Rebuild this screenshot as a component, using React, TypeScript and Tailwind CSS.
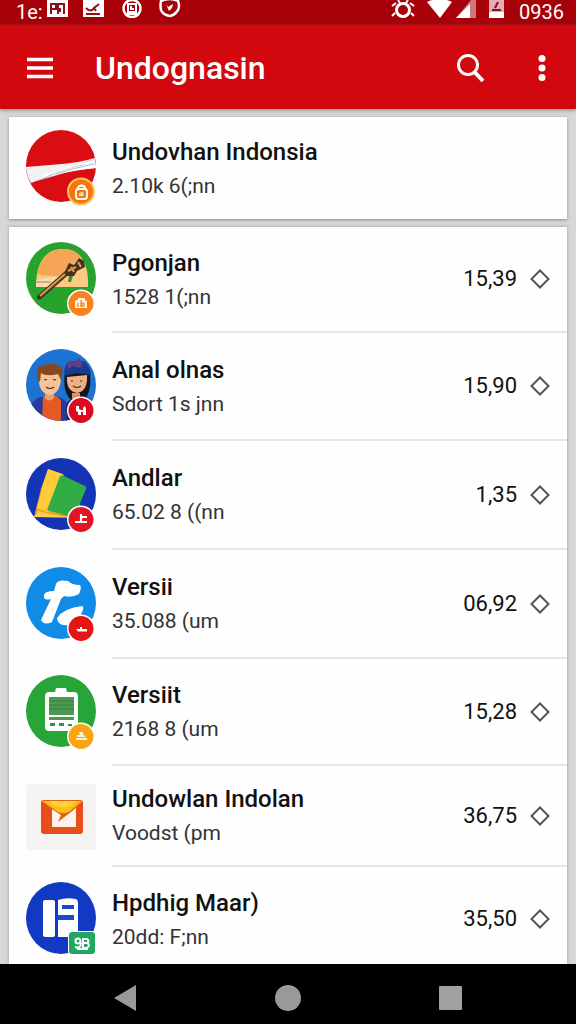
import React from "react";

type Item = {
  title: string;
  detail: string;
  amount?: string;
  icon: React.ReactNode;
  height: string;
};

const Disc = ({ fill, children }: { fill: string; children?: React.ReactNode }) => (
  <svg viewBox="0 0 72 76" className="h-[76px] w-[72px] shrink-0" aria-hidden="true">
    <ellipse cx="35" cy="36" rx="35" ry="36" fill={fill} />
    {children}
  </svg>
);

const Badge = ({ fill, children }: { fill: string; children?: React.ReactNode }) => (
  <g>
    <circle cx="55" cy="61.5" r="14" fill="#fff" />
    <circle cx="55" cy="61.5" r="12.5" fill={fill} />
    {children}
  </g>
);

const FlagIcon = () => (
  <Disc fill="#d90d12">
    <path d="M0 37C24 35 49 34 69 28L70 38C45 40 25 45 5 53Q1 47 0 37Z" fill="#f1f2f4" />
    <path d="M11 51Q34 38 69 29Q49 40 32 45Z" fill="#c5c8ce" />
    <path d="M20 48Q42 37 69 33L70 38Q40 41 20 48Z" fill="#fff" />
    <path d="M16 47Q40 37 68 31" stroke="#fff" strokeWidth="1.500" fill="none" />
    <path d="M30 44Q48 38 68 34" stroke="#b8bbc2" strokeWidth="1" fill="none" />
    <circle cx="55" cy="61.5" r="14" fill="#ffc267" />
    <circle cx="55" cy="61.5" r="12" fill="#f5760b" />
    <rect x="50" y="59" width="11" height="10" rx="2.5" fill="none" stroke="#fff" strokeWidth="1.8" />
    <path d="M51.500 58.500L53 56h5l1.500 2.500M55.500 56v-2" fill="none" stroke="#fff" strokeWidth="1.800" />
    <path d="M53 66v-3h1l1-1h2l1 4z" fill="#ffd9ae" />
  </Disc>
);

const FluteIcon = () => (
  <Disc fill="#27a22c">
    <path d="M10 45C10 24 17 7 37 7C56 7 63 24 62 45Z" fill="#fac982" />
    <path d="M11 32C14 17 22 8 37 7C45 7 51 10 55 15L32 34Q20 34 11 32Z" fill="#f6a557" />
    <path d="M10 38Q23 34 34 36L26 45H10Z" fill="#f9dcae" />
    <path d="M10 40h15" stroke="#b6a673" strokeWidth="1.500" />
    <path d="M11 54L39 29L43 21L48 23L53 16L58 19L59 25L51 29L48 34L41 34L15 57Q10 59 11 54Z" fill="#44301d" />
    <path d="M14 54L39 32M42 29L50 25M45 25l3 5M52 20l3 5" stroke="#d79850" strokeWidth="2.200" fill="none" />
    <path d="M43 34l4 0-2 6-3 0z" fill="#3c8b28" />
    <Badge fill="#f8811d">
      <path d="M50 58h2v-2h7v2l2 1v7H49v-7z" fill="#fff1df" />
      <path d="M52 65v-4M55 58v7M58 61h-2v4M58 61v4" stroke="#f8811d" strokeWidth="1.200" fill="none" />
    </Badge>
  </Disc>
);

const PeopleIcon = () => (
  <Disc fill="#1d73d2">
    <clipPath id="people">
      <ellipse cx="35" cy="36" rx="35" ry="36" />
    </clipPath>
    <g clipPath="url(#people)">
      <path d="M39 23Q36 43 45 51H58Q66 43 64 24Z" fill="#17171f" />
      <path d="M5 73V56Q8 49 19 47L29 47Q38 49 41 54V73Z" fill="#2a3a9b" />
      <path d="M17 47H30L35 51V74H16Z" fill="#e35a24" />
      <path d="M40 73V56Q42 50 50 48H61Q68 51 68 73Z" fill="#1c2c6d" />
      <path d="M19 43h9v6q-5 5-9 0z" fill="#e4a06e" />
      <path d="M13 25Q11 44 24 46Q36 44 35 24L28 20H17Z" fill="#f6c397" />
      <path d="M12 31Q8 17 18 16Q34 12 37 22L35 31L32 25Q20 28 15 24L14 33Z" fill="#87471f" />
      <path d="M41 28Q40 42 51 44Q62 42 61 26Z" fill="#efb083" />
      <path d="M38 27Q38 14 44 12L58 12Q64 16 65 26L51 24Z" fill="#173b8e" />
      <path d="M41 15L44 11L48 13L53 9L57 14L54 19L47 17L42 20Z" fill="#604083" />
      <path d="M46 44h8v6h-8z" fill="#dc9164" />
    </g>
    <path d="M18 31q2-1 3 0M27 31q2-1 3 0M20 38q4 3 8 0M45 32h2M54 32h2M47 37q4 3 8 0" stroke="#542e20" strokeWidth="1.200" fill="none" />
    <Badge fill="#dc0c20">
      <path d="M50 57h3v3l2 1v5h-3v-3l-2-1zM57 59l2-2 1 3v6h-3v-3h-2v-2h2z" fill="#fff" />
    </Badge>
  </Disc>
);

const FolderIcon = () => (
  <Disc fill="#1234b5">
    <path d="M22 11L37 16L57 53L45 60L8 59L15 31L18 29Z" fill="#f2a81c" />
    <path d="M22 11L36 16L22 54L11 50L16 32L15 31Z" fill="#ffcb3a" />
    <path d="M12 53L23 56L40 59H9Z" fill="#ffd154" />
    <path d="M34 18Q36 17 38 18L59 28Q61 29 60 31L48 60L21 52Z" fill="#32ad46" />
    <Badge fill="#e21622">
      <path d="M55 56v9M55 59h6M49 64h12" stroke="#fff" strokeWidth="2.200" fill="none" />
    </Badge>
  </Disc>
);

const StrokesIcon = () => (
  <Disc fill="#118be8">
    <path d="M30 17Q32 12 42 14Q46 18 54 18Q56 20 53 27Q46 31 38 29L35 32L26 55Q18 59 15 53L25 32Q17 34 18 28Q19 24 28 24Z" fill="#fff" />
    <path d="M31 51Q38 41 56 39Q59 40 55 47Q58 54 47 58Q31 60 31 51Z" fill="#fff" />
    <Badge fill="#e61514">
      <path d="M50 62h11v2.500h-9zM54 60h2v2h-2z" fill="#fff" />
    </Badge>
  </Disc>
);

const ClipboardIcon = () => (
  <Disc fill="#28a538">
    <path d="M19 22Q19 17 23 17H29L30 13H40L41 17H48Q52 17 52 22V52Q52 56 48 56H23Q19 56 19 52Z" fill="#fff" />
    <path d="M23 22h25v18H23zM23 42h25v3H23z" fill="#4e9951" />
    <path d="M23 26h25M23 30h25M23 34h25" stroke="#338241" strokeWidth="1" />
    <path d="M24 48h5v3h-5zM33 48h5v3h-5zM42 49h4v2h-4z" fill="#328d60" />
    <Badge fill="#faa414">
      <path d="M53 57h4v2l3 3H51v-2h3zM50 63h11v2H50z" fill="#fff0cd" />
    </Badge>
  </Disc>
);

const MailIcon = () => (
  <svg viewBox="0 0 72 66" className="h-[66px] w-[72px] shrink-0" aria-hidden="true">
    <rect width="70" height="66" rx="2" fill="#f5f4f2" />
    <rect x="15" y="16" width="42" height="34" rx="3" fill="#e94e18" />
    <path d="M26 23H50V43H26Z" fill="#fff2e9" />
    <path d="M15 18Q16 16 20 16H53Q56 16 57 18L45 28L32 38L35 31Z" fill="#df641b" />
    <path d="M16 17H56L43 28Q37 30 32 28Z" fill="#ffbd18" />
    <path d="M23 17H50L44 22Q35 25 28 21Z" fill="#ffd735" />
  </svg>
);

const BookIcon = () => (
  <Disc fill="#1239c3">
    <rect x="17" y="18" width="12" height="37" rx="2" fill="#fff" />
    <path d="M32 18Q40 15 50 17Q52 18 52 21V55H32Z" fill="#fff" />
    <path d="M36 23h12v4H36zM31 33h17v5H31z" fill="#1b49c9" />
    <rect x="42" y="49" width="28" height="24" rx="4" fill="#fff" />
    <rect x="43" y="50" width="26" height="22" rx="3" fill="#22a660" />
    <circle cx="52" cy="59" r="2.500" fill="none" stroke="#fff" strokeWidth="2" />
    <path d="M49 65q6 2 6-4M51 67h11M57 56v10M57 57h4q3 2 0 4h-4M61 61q4 2 0 5h-4" fill="none" stroke="#fff" strokeWidth="2" />
  </Disc>
);

const items: Item[] = [
  { title: "Pgonjan", detail: "1528 1(;nn", amount: "15,39", icon: <FluteIcon />, height: "h-[106px]" },
  { title: "Anal olnas", detail: "Sdort 1s jnn", amount: "15,90", icon: <PeopleIcon />, height: "h-[108px]" },
  { title: "Andlar", detail: "65.02 8 ((nn", amount: "1,35", icon: <FolderIcon />, height: "h-[109px]" },
  { title: "Versii", detail: "35.088 (um", amount: "06,92", icon: <StrokesIcon />, height: "h-[109px]" },
  { title: "Versiit", detail: "2168 8 (um", amount: "15,28", icon: <ClipboardIcon />, height: "h-[107px]" },
  { title: "Undowlan Indolan", detail: "Voodst (pm", amount: "36,75", icon: <MailIcon />, height: "h-[101px]" },
  { title: "Hpdhig Maar)", detail: "20dd: F;nn", amount: "35,50", icon: <BookIcon />, height: "h-[106px]" },
];

const Label = ({ title, detail }: { title: string; detail: string }) => (
  <div className="min-w-0 flex-1 pt-px">
    <h2 className="truncate text-[24px] leading-[34px] font-medium text-[#111]">{title}</h2>
    <p className="truncate text-[21px] leading-[34px] text-[#333]">{detail}</p>
  </div>
);

const StatusBar = () => (
  <div className="flex h-[26px] shrink-0 items-start bg-[#a60008] pr-3 pl-4 text-white">
    <span className="w-[31px] text-[20px] leading-6">1e:</span>
    <svg viewBox="0 0 134 18" className="h-[18px] w-[134px]" aria-hidden="true">
      <path d="M0 0h21v17H0zM36 0h21v17H36z" fill="#fff" />
      <path d="M3 4h6v5H4M4 4v10M11 14V4h6v10M13 8v4M39 8q5 5 8 0l5-4M39 14h14M47 8l2 3" stroke="#8d1018" strokeWidth="2" fill="none" />
      <circle cx="85" cy="8.500" r="8.500" fill="none" stroke="#fff" strokeWidth="2.500" />
      <path d="M81 4h8v8h-8zM84 6v3h3M80 14h10" fill="none" stroke="#fff" strokeWidth="2" />
      <path d="M114 1Q123-3 131 1q2 5 0 9-3 5-8 6-7-1-9-6-1-5 0-9Z" fill="none" stroke="#fff" strokeWidth="2.500" />
      <path d="M119 4l2 3 5-3-1 4-3 3z" fill="#fff" />
    </svg>
    <svg viewBox="0 0 116 19" className="ml-auto h-[19px] w-[116px]" aria-hidden="true">
      <circle cx="12" cy="10" r="6.500" fill="none" stroke="#fff" strokeWidth="3" />
      <path d="M5 3L1 6M19 3l4 3M4 13l-3 3M20 13l3 3M7 0l2 3M17 0l-2 3" stroke="#fff" strokeWidth="2" />
      <path d="M36 2Q48-4 61 2L49 18Z" fill="#fff" />
      <path d="M65 18L80 0H85V18Z" fill="#cf777d" />
      <path d="M65 18L79 4V18Z" fill="#fff" />
      <path d="M98 0h15v18H98z" fill="#e3adb1" />
      <path d="M98 12h15v6H98z" fill="#fff" />
      <path d="M107 2l-3 6M101 10l9 0" stroke="#8d1018" strokeWidth="2" />
    </svg>
    <span className="ml-3 text-[20px] leading-6">0936</span>
  </div>
);

const App = () => {
  return (
    <div className="flex h-screen flex-col overflow-hidden bg-[#d6d7d9] font-[Roboto,sans-serif]">
      <StatusBar />
      <header className="z-10 flex h-[83px] shrink-0 items-center bg-[#d3080f] pr-5 pl-[22px] text-white shadow-[0_1px_4px_#888]">
        <button type="button" aria-label="Menu" className="p-1">
          <svg viewBox="0 0 28 22" className="h-[22px] w-7">
            <path d="M1 2.500h26M1 11h26M1 19.500h26" stroke="#fff" strokeWidth="3.500" />
          </svg>
        </button>
        <h1 className="ml-[37px] flex-1 text-[32px] leading-10 font-medium">Undognasin</h1>
        <button type="button" aria-label="Search" className="p-1">
          <svg viewBox="0 0 30 30" className="h-[30px] w-[30px]">
            <circle cx="12" cy="12" r="9.500" fill="none" stroke="#fff" strokeWidth="3" />
            <path d="M18.500 19L27 28" stroke="#fff" strokeWidth="4" />
          </svg>
        </button>
        <button type="button" aria-label="More options" className="ml-[38px] p-1">
          <svg viewBox="0 0 20 28" className="h-7 w-5" fill="#fff">
            <circle cx="10" cy="4.500" r="3.500" />
            <circle cx="10" cy="14" r="3.500" />
            <circle cx="10" cy="23.500" r="3.500" />
          </svg>
        </button>
      </header>

      <main className="flex min-h-0 flex-1 flex-col gap-2 px-[9px] pt-2">
        <section className="flex h-[102px] shrink-0 items-center gap-[14px] bg-[#fefefe] pl-[17px] shadow-[0_1px_3px_#888]">
          <FlagIcon />
          <Label title="Undovhan Indonsia" detail="2.10k 6(;nn" />
        </section>

        <ul className="min-h-0 flex-1 overflow-hidden bg-[#fefefe] shadow-[0_0_3px_#999]">
          {items.map((item) => (
            <li key={item.title} className={`flex items-center gap-[14px] pl-[17px] ${item.height}`}>
              {item.icon}
              <div className="flex h-full min-w-0 flex-1 items-center border-b-2 border-[#e4e5e6] pr-[13px]">
                <Label title={item.title} detail={item.detail} />
                <span className="text-[22px] leading-8 text-[#111]">{item.amount}</span>
                <button type="button" aria-label={`Select ${item.title}`} className="ml-[9px] p-1">
                  <svg viewBox="0 0 20 20" className="h-5 w-5">
                    <path d="M10 1.500L18.500 10L10 18.500L1.500 10Z" fill="none" stroke="#555" strokeWidth="2" />
                  </svg>
                </button>
              </div>
            </li>
          ))}
        </ul>
      </main>

      <nav className="z-10 flex h-[60px] shrink-0 items-center justify-center gap-[135px] bg-black pt-2">
        <button type="button" aria-label="Back">
          <svg viewBox="0 0 28 28" className="h-7 w-7">
            <path d="M3 14L25 1V27Z" fill="#999" />
          </svg>
        </button>
        <button type="button" aria-label="Home">
          <svg viewBox="0 0 28 28" className="h-7 w-7">
            <circle cx="14" cy="14" r="13" fill="#999" />
          </svg>
        </button>
        <button type="button" aria-label="Recent apps">
          <svg viewBox="0 0 28 28" className="h-7 w-7">
            <rect x="2" y="2" width="23" height="24" rx="1" fill="#a0a0a0" />
          </svg>
        </button>
      </nav>
    </div>
  );
};

export default App;
